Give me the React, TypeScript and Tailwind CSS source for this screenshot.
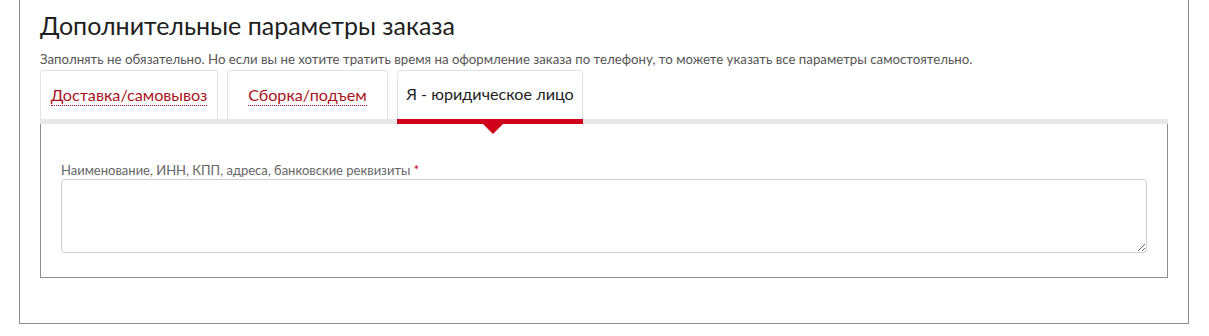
import React, { useState } from "react";

const FONT = "font-['Lato','Roboto','Liberation_Sans',sans-serif]";

const tabs = [
  { id: "delivery", label: "Доставка/самовывоз", w: "w-[178px]" },
  { id: "assembly", label: "Сборка/подъем", w: "w-[161px]" },
  { id: "legal", label: "Я - юридическое лицо", w: "w-[186px]" },
];

const OrderExtras = () => {
  const [active, setActive] = useState("legal");

  return (
    <div className={`w-[1209px] h-[336px] bg-white overflow-hidden ${FONT}`}>
      <div className="ml-[19px] w-[1170px] h-[324px] border-x border-b border-[#8c8c8c] px-5">
        <h2 className="pt-[9px] text-[25px] leading-[32px] text-[#1e1e1e]">
          Дополнительные параметры заказа
        </h2>
        <p className="mt-[9px] text-[13.25px] leading-[18px] text-[#555]">
          Заполнять не обязательно. Но если вы не хотите тратить время на
          оформление заказа по телефону, то можете указать все параметры
          самостоятельно.
        </p>

        {/* tabs */}
        <div className="mt-[2px] flex gap-[9px] h-[49px]">
          {tabs.map((t) => {
            const isActive = t.id === active;
            return (
              <button
                key={t.id}
                onClick={() => setActive(t.id)}
                className={`${t.w} h-[49px] bg-white border border-b-0 border-[#e3e3e3] rounded-t-[4px] flex items-center justify-center pb-[1px] text-[16.2px]`}
              >
                {isActive ? (
                  <span className="text-[#1e1e1e]">{t.label}</span>
                ) : (
                  <span className="text-[#a8121c] border-b border-dotted border-[#a8121c] leading-[21px]">
                    {t.label}
                  </span>
                )}
              </button>
            );
          })}
        </div>

        {/* panel */}
        <div className="w-[1128px] relative">
          <div className="h-[5px] bg-[#e8e8e8] flex gap-[9px]">
            {tabs.map((t) => (
              <div
                key={t.id}
                className={`${t.w} h-[5px] ${t.id === active ? "bg-[#d0021b]" : ""}`}
              />
            ))}
          </div>
          <div className="absolute top-[5px] left-[443px] w-0 h-0 border-x-[10px] border-x-transparent border-t-[10px] border-t-[#d0021b]" />
          <div className="border-x border-b border-[#8c8c8c] px-5 pt-[38px] pb-[24px]">
            <label className="block text-[13px] leading-[16px] text-[#666] mb-[1px]">
              Наименование, ИНН, КПП, адреса, банковские реквизиты{" "}
              <span className="text-[#d0021b]">*</span>
            </label>
            <textarea className="block w-full h-[74px] border border-[#cfcfcf] rounded-[4px] bg-white outline-none" />
          </div>
        </div>
      </div>
    </div>
  );
};

export default function App() {
  return <OrderExtras />;
}
